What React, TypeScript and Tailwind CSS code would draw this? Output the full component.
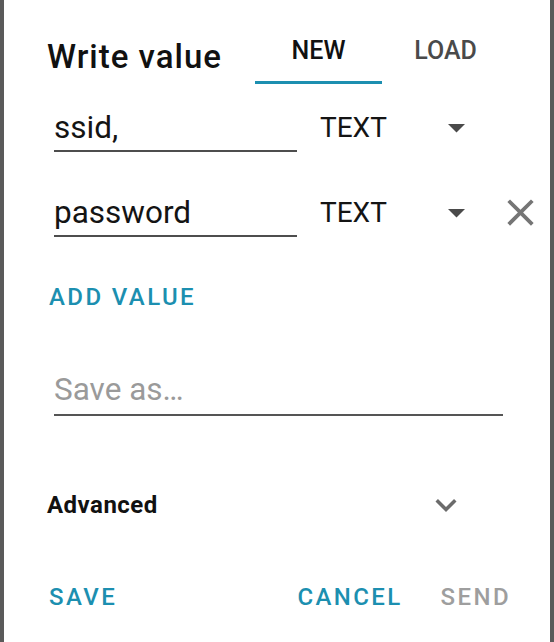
const teal = "text-[#1c8fb0]";

function DropArrow() {
  return (
    <svg width="17" height="9" viewBox="0 0 17 9" className="shrink-0">
      <polygon points="0,0 17,0 8.5,8.5" fill="#4a4a4a" />
    </svg>
  );
}

function TypeSpinner() {
  return (
    <div className="w-[145px] h-[40px] flex items-center justify-between">
      <span className="text-[28px] leading-[40px] text-[#141414]">TEXT</span>
      <DropArrow />
    </div>
  );
}

function ValueRow({ value, removable, top }: { value: string; removable?: boolean; top: string }) {
  return (
    <div className={`flex items-start ${top}`}>
      <div className="ml-[7px] w-[243px] pb-[2px] border-b-2 border-[#4d4d4d] text-[31.5px] leading-[40px] text-[#141414]">
        {value}
      </div>
      <div className="ml-[23px]">
        <TypeSpinner />
      </div>
      {removable && (
        <svg width="45" height="45" viewBox="0 0 24 24" className="ml-[33px] -mt-[3px]">
          <path
            fill="#757575"
            d="M19 6.41L17.59 5 12 10.59 6.41 5 5 6.41 10.59 12 5 17.59 6.41 19 12 13.41 17.59 19 19 17.59 13.41 12z"
          />
        </svg>
      )}
    </div>
  );
}

export default function App() {
  return (
    <div className="w-[554px] h-[642px] flex bg-[#5a5a5a] font-['Roboto',sans-serif] overflow-hidden">
      <div className="w-[4px] shrink-0" />
      <div className="w-[546px] h-full bg-white flex flex-col pl-[43px]">
        {/* header */}
        <div className="h-[84px] flex">
          <div className="w-[208px] mt-[39px] text-[33px] leading-[36px] font-medium tracking-[0.03em] text-[#111]">
            Write value
          </div>
          <div className="w-[127px] h-full pt-[37px] flex justify-center border-b-[3px] border-[#1c8fb0]">
            <span className="text-[25px] leading-[28px] font-medium text-[#111]">NEW</span>
          </div>
          <div className="w-[127px] h-full pt-[37px] flex justify-center border-b-[3px] border-transparent">
            <span className="text-[25px] leading-[28px] font-medium text-[#4a4a4a]">LOAD</span>
          </div>
        </div>

        <ValueRow value="ssid," top="mt-[24px]" />
        <ValueRow value="password" removable top="mt-[41px]" />

        <div className={`mt-[44px] ml-[2px] text-[24px] leading-[32px] font-medium tracking-[0.1em] ${teal}`}>
          ADD VALUE
        </div>

        <div className="mt-[57px] ml-[7px] w-[449px] pb-[4px] border-b-2 border-[#555] text-[31.5px] leading-[40px] text-[#9a9a9a]">
          Save as…
        </div>

        <div className="mt-[68px] w-[420px] flex items-center justify-between">
          <span className="text-[24px] leading-[30px] font-bold tracking-[0.02em] text-[#111]">Advanced</span>
          <svg width="42" height="42" viewBox="0 0 24 24">
            <path fill="#6b6b6b" d="M16.59 8.59L12 13.17 7.41 8.59 6 10l6 6 6-6z" />
          </svg>
        </div>

        <div className="mt-[55px] ml-[2px] w-[462px] flex items-center justify-between text-[24px] leading-[32px] font-medium tracking-[0.1em]">
          <span className={teal}>SAVE</span>
          <div className="flex gap-[38px]">
            <span className={teal}>CANCEL</span>
            <span className="text-[#9e9e9e]">SEND</span>
          </div>
        </div>
      </div>
      <div className="flex-1" />
    </div>
  );
}
